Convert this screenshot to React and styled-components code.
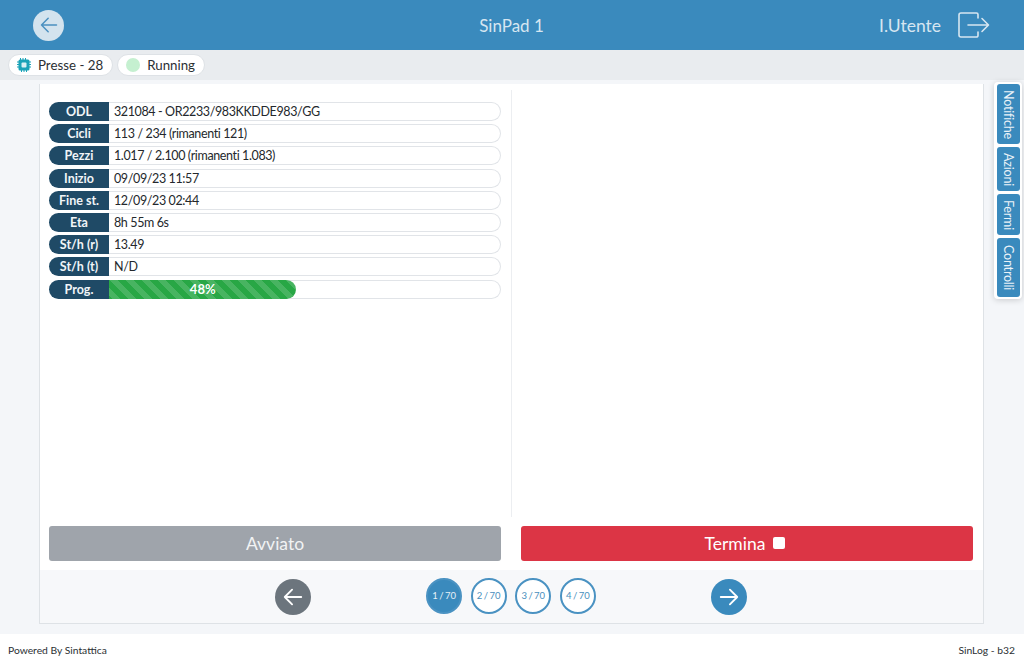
import React from "react";
import styled, { createGlobalStyle } from "styled-components";

const GlobalStyle = createGlobalStyle`
  html, body {
    margin: 0;
    padding: 0;
    background: #fff;
    font-family: "Lato", "Liberation Sans", sans-serif;
  }
  * {
    box-sizing: border-box;
  }
`;

const Page = styled.div`
  position: relative;
  width: 1024px;
  height: 666px;
  display: flex;
  flex-direction: column;
  overflow: hidden;
`;

const Header = styled.header`
  height: 50px;
  flex: none;
  background: #3a8abd;
  display: grid;
  grid-template-columns: 1fr auto 1fr;
  align-items: center;
  padding: 0 34px 0 33px;
  color: #d6e6f1;
`;

const BackButton = styled.div`
  width: 31px;
  height: 31px;
  border-radius: 50%;
  background: #d3e3ee;
  display: flex;
  align-items: center;
  justify-content: center;
`;

const Title = styled.div`
  font-size: 17px;
`;

const UserBox = styled.div`
  display: flex;
  justify-content: flex-end;
  align-items: center;
  gap: 17px;
  font-size: 17.5px;
`;

const SubBar = styled.div`
  height: 30px;
  flex: none;
  background: #e9ecef;
  display: flex;
  align-items: center;
  gap: 4px;
  padding: 0 8px;
`;

const Chip = styled.div`
  height: 22px;
  background: #fff;
  border: 1px solid #dee2e6;
  border-radius: 11px;
  display: flex;
  align-items: center;
  gap: ${(p) => p.$gap || 7}px;
  padding: 0 9px 0 ${(p) => p.$left || 8}px;
  font-size: 13.3px;
  color: #2b2f33;
`;

const StatusDot = styled.span`
  width: 14px;
  height: 14px;
  border-radius: 50%;
  background: #c5f0d0;
`;

const Main = styled.main`
  flex: 1;
  background: #f4f6f9;
  padding: 4px 40px 10px 39px;
  display: flex;
`;

const Card = styled.section`
  flex: 1;
  background: #fff;
  border: 1px solid #dee2e6;
  border-top: 0;
  display: flex;
  flex-direction: column;
`;

const Columns = styled.div`
  flex: 1;
  display: grid;
  grid-template-columns: 1fr 1fr;
  padding-top: 6px;
`;

const Column = styled.div`
  padding: 12px 10px 0 9px;
  height: 427px;
  &:first-child {
    border-right: 1px solid #eceef1;
  }
`;

const InfoList = styled.div`
  display: flex;
  flex-direction: column;
  gap: 3.2px;
`;

const InfoRow = styled.div`
  height: 19px;
  display: flex;
  background: #fff;
  border: 1px solid #e1e4e8;
  border-left: 0;
  border-radius: 10px;
  font-size: 12.5px;
  letter-spacing: -0.38px;
  line-height: 17px;
  color: #24282c;
`;

const InfoLabel = styled.div`
  width: 60px;
  flex: none;
  margin: -1px 0;
  height: 19px;
  background: #1f4a66;
  color: #f1f5f8;
  border-radius: 10px 0 0 10px;
  text-align: center;
  font-weight: 700;
  font-size: 12.5px;
  letter-spacing: 0;
  line-height: 19px;
`;

const InfoValue = styled.div`
  flex: 1;
  padding-left: 5px;
  white-space: nowrap;
`;

const ProgressTrack = styled.div`
  flex: 1;
  margin: -1px 0;
`;

const ProgressBar = styled.div`
  height: 19px;
  border-radius: 0 10px 10px 0;
  background-color: #28a745;
  background-image: linear-gradient(
    45deg,
    rgba(255, 255, 255, 0.15) 25%,
    transparent 25%,
    transparent 50%,
    rgba(255, 255, 255, 0.15) 50%,
    rgba(255, 255, 255, 0.15) 75%,
    transparent 75%,
    transparent
  );
  background-size: 16px 16px;
  color: #fff;
  font-weight: 700;
  font-size: 13px;
  letter-spacing: 0;
  line-height: 19px;
  text-align: center;
`;

const Actions = styled.div`
  display: grid;
  grid-template-columns: 1fr 1fr;
  gap: 20px;
  padding: 9px 10px 9px 9px;
`;

const ActionButton = styled.div`
  height: 35px;
  border-radius: 3px;
  background: ${(p) => p.$bg};
  color: ${(p) => p.$color};
  font-size: 17.5px;
  display: flex;
  align-items: center;
  justify-content: center;
  gap: 8px;
`;

const StopMark = styled.span`
  width: 12px;
  height: 12px;
  border-radius: 2px;
  background: #fff;
  margin: -2px 4px 0 0;
`;

const NavBar = styled.nav`
  height: 53px;
  flex: none;
  background: #f7f8fa;
  display: flex;
  justify-content: center;
  align-items: center;
  gap: 115px;
  padding-right: 1px;
`;

const RoundArrow = styled.div`
  width: 36px;
  height: 36px;
  border-radius: 50%;
  background: ${(p) => p.$bg};
  display: flex;
  align-items: center;
  justify-content: center;
`;

const Pager = styled.div`
  display: flex;
  gap: 8.6px;
  margin-top: -2px;
`;

const PageDot = styled.div`
  width: 36px;
  height: 36px;
  border-radius: 50%;
  border: 2px solid #4a92c2;
  background: ${(p) => (p.$active ? "#3a8abd" : "#fff")};
  color: ${(p) => (p.$active ? "#e6f0f7" : "#4a8fbd")};
  font-size: 9.5px;
  word-spacing: -1px;
  display: flex;
  align-items: center;
  justify-content: center;
`;

const Footer = styled.footer`
  height: 32px;
  flex: none;
  background: #fff;
  display: flex;
  justify-content: space-between;
  align-items: center;
  padding: 0 9px 0 8px;
  font-size: 10.3px;
  color: #2b2f33;
`;

const SideTabs = styled.aside`
  position: absolute;
  top: 82px;
  right: 2px;
  padding: 2px 2px 2px 3px;
  background: #fff;
  box-shadow: 0 1px 6px rgba(0, 0, 0, 0.18);
  border-radius: 4px;
  display: flex;
  flex-direction: column;
  gap: 3px;
`;

const SideTab = styled.div`
  width: 23px;
  height: ${(p) => p.$h}px;
  background: #3a8abd;
  color: #eaf2f8;
  border-radius: 3px;
  writing-mode: vertical-rl;
  font-size: 12.5px;
  letter-spacing: -0.2px;
  line-height: 23px;
  text-align: center;
`;

const Arrow = ({ dir, color, size = 22, width = 2 }) => (
  <svg
    width={size}
    height={size}
    viewBox="0 0 24 24"
    fill="none"
    stroke={color}
    strokeWidth={width}
    strokeLinecap="round"
    strokeLinejoin="round"
  >
    {dir === "left" ? (
      <path d="M21 12H3M11 4l-8 8 8 8" />
    ) : (
      <path d="M3 12h18M13 4l8 8-8 8" />
    )}
  </svg>
);

const LogoutIcon = () => (
  <svg width="32" height="26" viewBox="0 0 32 26" fill="none" stroke="#d6e6f1" strokeWidth="1.6" strokeLinecap="round" strokeLinejoin="round">
    <path d="M20 6V2.500A1.500 1.500 0 0 0 18.500 1H3A2 2 0 0 0 1 3v20a2 2 0 0 0 2 2h15.500A1.500 1.500 0 0 0 20 23.500V20" />
    <path d="M10 13h20M24 6.500l6.500 6.500-6.500 6.500" />
  </svg>
);

const ChipIcon = () => (
  <svg width="16" height="16" viewBox="0 0 16 16">
    <path
      d="M4 1h1v1.500h1.500V1h1v1.500h1.500V1h1v1.500H12A1.500 1.500 0 0 1 13.500 4v.5H15v1h-1.500V7H15v1h-1.500v1.500H15v1h-1.500V12a1.500 1.500 0 0 1-1.500 1.500h-1V15h-1v-1.500H8.500V15h-1v-1.500H6V15H5v-1.500H4A1.500 1.500 0 0 1 2.500 12v-1.500H1v-1h1.500V8H1V7h1.500V5.500H1v-1h1.500V4A1.500 1.500 0 0 1 4 2.500z"
      fill="#1aa3b8"
    />
    <rect x="5.500" y="5.500" width="5" height="5" rx="1" fill="#d8f1f5" />
  </svg>
);

const rows = [
  ["ODL", "321084 - OR2233/983KKDDE983/GG"],
  ["Cicli", "113 / 234 (rimanenti 121)"],
  ["Pezzi", "1.017 / 2.100 (rimanenti 1.083)"],
  ["Inizio", "09/09/23 11:57"],
  ["Fine st.", "12/09/23 02:44"],
  ["Eta", "8h 55m 6s"],
  ["St/h (r)", "13.49"],
  ["St/h (t)", "N/D"],
];

const tabs = [
  ["Notifiche", 60],
  ["Azioni", 44],
  ["Fermi", 41],
  ["Controlli", 59],
];

const pages = ["1 / 70", "2 / 70", "3 / 70", "4 / 70"];

export default function App() {
  return (
    <Page>
      <GlobalStyle />
      <Header>
        <BackButton>
          <Arrow dir="left" color="#4b90c0" size={20} width={1.8} />
        </BackButton>
        <Title>SinPad 1</Title>
        <UserBox>
          I.Utente
          <LogoutIcon />
        </UserBox>
      </Header>
      <SubBar>
        <Chip $gap={6} $left={7}>
          <ChipIcon />
          Presse - 28
        </Chip>
        <Chip>
          <StatusDot />
          Running
        </Chip>
      </SubBar>
      <Main>
        <Card>
          <Columns>
            <Column>
              <InfoList>
                {rows.map(([label, value]) => (
                  <InfoRow key={label}>
                    <InfoLabel>{label}</InfoLabel>
                    <InfoValue>{value}</InfoValue>
                  </InfoRow>
                ))}
                <InfoRow>
                  <InfoLabel>Prog.</InfoLabel>
                  <ProgressTrack>
                    <ProgressBar style={{ width: "48%" }}>48%</ProgressBar>
                  </ProgressTrack>
                </InfoRow>
              </InfoList>
            </Column>
            <Column />
          </Columns>
          <Actions>
            <ActionButton $bg="#9fa4ab" $color="#f2f3f4">Avviato</ActionButton>
            <ActionButton $bg="#dc3545" $color="#fff">
              Termina <StopMark />
            </ActionButton>
          </Actions>
          <NavBar>
            <RoundArrow $bg="#6c757d">
              <Arrow dir="left" color="#fff" />
            </RoundArrow>
            <Pager>
              {pages.map((p, i) => (
                <PageDot key={p} $active={i === 0}>{p}</PageDot>
              ))}
            </Pager>
            <RoundArrow $bg="#3a8abd">
              <Arrow dir="right" color="#fff" />
            </RoundArrow>
          </NavBar>
        </Card>
      </Main>
      <Footer>
        <span>Powered By Sintattica</span>
        <span>SinLog - b32</span>
      </Footer>
      <SideTabs>
        {tabs.map(([name, h]) => (
          <SideTab key={name} $h={h}>{name}</SideTab>
        ))}
      </SideTabs>
    </Page>
  );
}
